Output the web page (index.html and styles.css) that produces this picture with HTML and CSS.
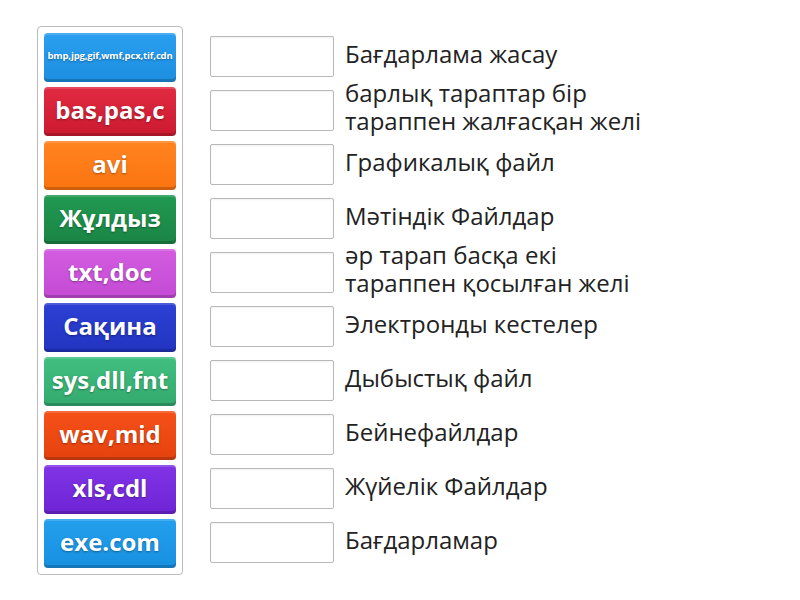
FILE: index.html
```
<!DOCTYPE html>
<html>
<head>
<meta charset="utf-8">
<link rel="stylesheet" href="styles.css">
</head>
<body>
<div class="page">
  <div class="tiles">
    <div class="tile c1 small">bmp,jpg,gif,wmf,pcx,tif,cdn</div>
    <div class="tile c2">bas,pas,c</div>
    <div class="tile c3">avi</div>
    <div class="tile c4">Жұлдыз</div>
    <div class="tile c5">txt,doc</div>
    <div class="tile c6">Сақина</div>
    <div class="tile c7">sys,dll,fnt</div>
    <div class="tile c8">wav,mid</div>
    <div class="tile c9">xls,cdl</div>
    <div class="tile c10">exe.com</div>
  </div>
  <div class="targets">
    <div class="row"><div class="box"></div><div class="label">Бағдарлама жасау</div></div>
    <div class="row"><div class="box"></div><div class="label two">барлық тараптар бір<br>тараппен жалғасқан желі</div></div>
    <div class="row"><div class="box"></div><div class="label">Графикалық файл</div></div>
    <div class="row"><div class="box"></div><div class="label">Мәтіндік Файлдар</div></div>
    <div class="row"><div class="box"></div><div class="label two">әр тарап басқа екі<br>тараппен қосылған желі</div></div>
    <div class="row"><div class="box"></div><div class="label">Электронды кестелер</div></div>
    <div class="row"><div class="box"></div><div class="label">Дыбыстық файл</div></div>
    <div class="row"><div class="box"></div><div class="label">Бейнефайлдар</div></div>
    <div class="row"><div class="box"></div><div class="label">Жүйелік Файлдар</div></div>
    <div class="row"><div class="box"></div><div class="label">Бағдарламар</div></div>
  </div>
</div>
</body>
</html>
```
FILE: styles.css
```
html, body {
  margin: 0;
  padding: 0;
  background: #fff;
  font-family: "Open Sans", "Noto Sans", sans-serif;
}
.page {
  display: flex;
  align-items: flex-start;
  padding: 26px 0 0 37px;
  gap: 27px;
}
.tiles {
  display: flex;
  flex-direction: column;
  gap: 5px;
  padding: 6px;
  border: 1px solid #bdbdbd;
  border-radius: 4px;
  box-shadow: 0 1px 1px rgba(0,0,0,0.08);
}
.tile {
  width: 132px;
  height: 49px;
  box-sizing: border-box;
  border-radius: 4px;
  display: flex;
  align-items: center;
  justify-content: center;
  color: #fff;
  font-weight: 700;
  font-size: 24px;
  text-shadow: 0 1px 2px rgba(0,0,0,0.35);
  box-shadow: inset 0 -3px 0 rgba(0,0,0,0.18), inset 0 2px 0 rgba(255,255,255,0.15);
  padding-bottom: 4px;
}
.tile.small {
  font-size: 9.5px;
  letter-spacing: -0.15px;
}
.c1 { background: linear-gradient(#2a9ff0, #1d8ee0); }
.c2 { background: linear-gradient(#e02a42, #cc1a30); }
.c3 { background: linear-gradient(#ff8420, #fb7410); }
.c4 { background: linear-gradient(#219a52, #1a8444); }
.c5 { background: linear-gradient(#d35ce0, #c44ad4); }
.c6 { background: linear-gradient(#2c40d4, #2234c0); }
.c7 { background: linear-gradient(#40bf80, #34aa6e); }
.c8 { background: linear-gradient(#f65018, #e4420e); }
.c9 { background: linear-gradient(#8034e6, #6e24d4); }
.c10 { background: linear-gradient(#239fee, #1790e0); }
.targets {
  display: flex;
  flex-direction: column;
  gap: 5px;
  padding-top: 7px;
}
.row {
  height: 49px;
  display: flex;
  align-items: center;
  gap: 11px;
}
.box {
  width: 124px;
  height: 41px;
  box-sizing: border-box;
  border: 1px solid #b8b8b8;
  border-radius: 2px;
  box-shadow: inset 0 1px 2px rgba(0,0,0,0.06);
  flex: none;
  margin-top: -2px;
}
.label {
  font-size: 24px;
  line-height: 28px;
  color: #222;
  margin-top: -7px;
  white-space: nowrap;
}
.label.two {
  margin-top: -10px;
}
```
